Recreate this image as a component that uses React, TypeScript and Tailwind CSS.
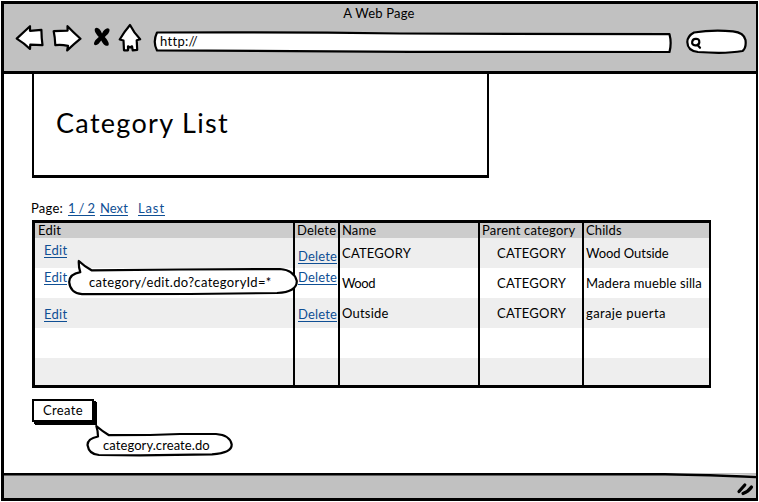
import type { ReactNode } from "react";

const ink = { fill: "white", stroke: "black", strokeWidth: 2.2, strokeLinejoin: "round", strokeLinecap: "round" } as const;

function Link({ children, className = "" }: { children: ReactNode; className?: string }) {
  return (
    <a className={`block h-4 w-fit whitespace-nowrap border-b border-[#0f4f94] leading-[17px] text-[#0f4f94] ${className}`}>
      {children}
    </a>
  );
}

function Toolbar() {
  return (
    <div className="mt-[2px] flex h-[30px] items-start pl-[10px]">
      <svg className="h-[30px] w-[30px]" viewBox="14 22 30 30" {...ink}>
        <path d="M16.7 37.6 L30 25.2 L30 29.8 L41.4 28.8 Q41.5 37 42.5 44.2 L30.3 43.7 L30 48 Q24 42 16.7 37.6Z" />
      </svg>
      <svg className="ml-2 h-[30px] w-[30px]" viewBox="52 22 30 30" {...ink}>
        <path d="M53.7 30.2 L67.6 29.6 L67.5 25.2 Q73 31 80.5 37.7 Q74 43 67.2 49.4 L68 44.8 Q61 43.5 55.3 44.2 Q55 36 53.7 30.2Z" />
      </svg>
      <svg className="ml-[10px] h-[30px] w-5" viewBox="92 22 20 30">
        <path d="M95 27.5 C97.5 25.5 100 28 102 32.5 C104 28.5 107 26 109.3 28 C110.5 31 107 34 104.8 36 C107 38.5 110 42.5 108.3 44.5 C105 46 102.5 42 101.2 39.5 C99.5 42 96.5 45.5 94.3 43.8 C93 41 96.5 38 98.8 36 C96.5 33.5 93.8 30 95 27.5Z" />
      </svg>
      <svg className="ml-[5px] h-[30px] w-[26px]" viewBox="117 22 26 30" {...ink}>
        <path d="M130 24 Q134 32 140.2 38.2 L136.7 39.2 L137.2 48.8 L132.7 49.3 L132 45.3 L130 46.5 L128 45.3 L128 49.3 L124 49.3 L123.5 39.5 L119.7 38.5 Q124 31 130 24Z" />
      </svg>
      <div className="relative ml-[9px] h-[30px] w-[522px]">
        <svg className="absolute inset-0 h-[30px] w-[522px]" viewBox="152 22 522 30" {...ink}>
          <path d="M157 31.5 Q280 30.8 400 32.5 L669.5 33.2 Q671.8 42 669.5 51 L410 50.8 L157 49.4 Q152.5 41 157 31.5Z" />
        </svg>
        <span className="relative block pl-2 pt-[10px] leading-4 tracking-[0.3px]">http://</span>
      </div>
      <svg className="ml-[10px] h-[32px] w-[65px]" viewBox="684 22 65 32" {...ink}>
        <path d="M694 31.5 Q712 28.5 733 30.3 Q744 31.5 745.5 39 Q746.5 47 742.5 50 Q726 53 698 51 Q687.5 50 687.3 41 Q687.5 35 694 31.5Z" />
        <path d="M695.6 37.8 Q699.5 37.5 699.3 41.3 Q699 44.6 695.2 44.3 Q691.7 44 692.2 40.8 Q692.6 38 695.6 37.8Z M697.3 43.8 L700 46.8" />
      </svg>
    </div>
  );
}

type Row = { name?: string; nameCls?: string; childs?: string; childCls?: string; edit: string; del: string; bg: string };

const rows: Row[] = [
  { name: "CATEGORY", nameCls: "tracking-[0.2px]", childs: "Wood Outside", childCls: "tracking-[-0.05px]", edit: "mt-1", del: "mt-[10px]", bg: "h-[30px] bg-[#eeeeee]" },
  { name: "Wood", nameCls: "tracking-[-0.4px]", childs: "Madera mueble silla", childCls: "tracking-[0.12px]", edit: "mt-px", del: "mt-px", bg: "h-[30px] bg-white" },
  { name: "Outside", nameCls: "tracking-[0.2px]", childs: "garaje puerta", childCls: "tracking-[0.38px]", edit: "mt-2", del: "mt-2", bg: "h-[30px] bg-[#eeeeee]" },
  { edit: "", del: "", bg: "h-[30px] bg-white" },
  { edit: "", del: "", bg: "h-[27px] bg-[#eeeeee]" },
];

function CategoryTable() {
  const cols = "grid grid-cols-[260px_45px_140px_104px_125px]";
  const cell = "border-r-2 border-black whitespace-nowrap";
  return (
    <div className="ml-7 mt-1 w-[679px] border-[3px] border-r-2 border-black">
      <div className={`${cols} h-[15px] bg-[#cccccc] leading-[15px]`}>
        <div className={`${cell} pl-[3px] tracking-[0.2px]`}>Edit</div>
        <div className={`${cell} pl-[2px] tracking-[0.2px]`}>Delete</div>
        <div className={`${cell} pl-[2px] tracking-[0.1px]`}>Name</div>
        <div className={`${cell} pl-[2px] tracking-[0.22px]`}>Parent category</div>
        <div className="pl-[2px] tracking-[0.1px]">Childs</div>
      </div>
      {rows.map((r, i) => (
        <div key={i} className={`${cols} ${r.bg}`}>
          <div className={`${cell} pl-[9px]`}>{r.name && <Link className={`${r.edit} tracking-[0.25px]`}>Edit</Link>}</div>
          <div className={`${cell} pl-[3px]`}>{r.name && <Link className={`${r.del} tracking-[0.15px]`}>Delete</Link>}</div>
          <div className={`${cell} pl-[2px] pt-[7px] leading-4 ${r.nameCls ?? ""}`}>{r.name}</div>
          <div className={`${cell} pl-[17px] pt-[7px] leading-4 tracking-[0.2px]`}>{r.name && "CATEGORY"}</div>
          <div className={`pl-[2px] pt-[7px] leading-4 whitespace-nowrap ${r.childCls ?? ""}`}>{r.childs}</div>
        </div>
      ))}
    </div>
  );
}

export default function App() {
  return (
    <div className="relative h-[502px] w-[759px] overflow-hidden bg-white pl-px pt-px font-['Lato','Open_Sans',sans-serif] text-[13px] text-black">
      <div className="flex h-[500px] w-[757px] flex-col border-[3px] border-r-2 border-black">
        <header className="h-[70px] shrink-0 border-b-[3px] border-black bg-[#c1c1c1]">
          <div className="pr-[2px] pt-px text-center leading-4 tracking-[0.2px]">A Web Page</div>
          <Toolbar />
        </header>

        <main className="h-[399px] shrink-0">
          <div className="ml-7 h-[104px] w-[457px] border-x-2 border-b-[3px] border-black pl-[22px] pt-[33px]">
            <h1 className="text-[27px] leading-8 tracking-[1.3px]">Category List</h1>
          </div>
          <nav className="mt-[22px] flex h-4 pl-[27px] leading-[17px]">
            <span className="w-[37px] tracking-[0.25px]">Page:</span>
            <Link className="w-[27px] tracking-[-0.15px]">1 / 2</Link>
            <Link className="ml-[5px] tracking-[0.1px]">Next</Link>
            <Link className="ml-[10px] tracking-[0.9px]">Last</Link>
          </nav>
          <CategoryTable />
          <button className="ml-7 mt-[11px] block h-[23px] w-[62px] border-2 border-black bg-white leading-[19px] tracking-[0.4px] shadow-[2px_2px_0_black,3px_3px_0_black]">
            Create
          </button>
        </main>

        <footer className="relative flex-1 bg-[#c1c1c1]">
          <svg className="absolute left-0 top-0 h-[26px] w-[752px]" viewBox="4 473 752 26">
            <path d="M4 472 H640 L756 475 V478 Q710 475 665 474.5 H4Z" fill="white" />
            <path d="M4 474.3 H665 Q710 474.8 756 477" fill="none" stroke="black" strokeWidth="2.6" />
            <path d="M739 491.5 L744.8 485 M743 493.5 Q748.5 491.5 751.5 487" fill="none" stroke="black" strokeWidth="3.2" strokeLinecap="round" />
          </svg>
        </footer>
      </div>

      <div className="absolute left-[67px] top-[259px] h-[38px] w-[232px]">
        <svg className="absolute inset-0 h-[38px] w-[232px]" viewBox="67 259 232 38" {...ink}>
          <path d="M91.5 270.3 Q84 266 78.8 261 Q78.5 267 80.3 272.2 Q69.5 274 69.2 282 Q70 293 82 294.2 L190 294 L277 293 Q297 292 296.8 281 Q294 270 280 269 L180 269.5Z" />
        </svg>
        <span className="relative block whitespace-nowrap pl-[22px] pt-[15px] leading-4 tracking-[0.35px]">category/edit.do?categoryId=*</span>
      </div>
      <div className="absolute left-[85px] top-[423px] h-[35px] w-[150px]">
        <svg className="absolute inset-0 h-[35px] w-[150px]" viewBox="85 423 150 35" {...ink}>
          <path d="M109 435.2 Q102 431 96.3 426 Q98 431 98 436.5 Q87.5 438.5 87.5 445 Q89 454.5 99 455 L140 455.3 L212 454.3 Q232 453 231.7 444.5 Q230 435 216 434 L180 434 L150 435Z" />
        </svg>
        <span className="relative block whitespace-nowrap pl-[18px] pt-[14px] leading-4 tracking-[0.08px]">category.create.do</span>
      </div>
    </div>
  );
}
